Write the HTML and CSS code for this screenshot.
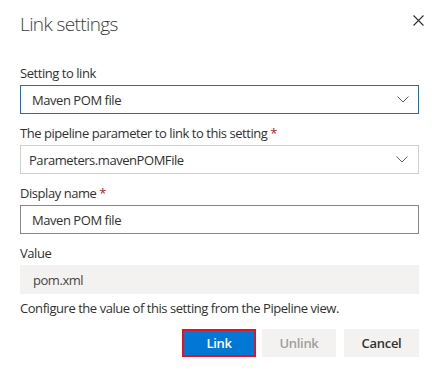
FILE: index.html
```html
<!DOCTYPE html>
<html lang="en">
<head>
<meta charset="utf-8">
<title>Link settings</title>
<link rel="stylesheet" href="styles.css">
</head>
<body>
<div class="dialog">
  <div class="header">
    <h1 class="title">Link settings</h1>
    <button class="close" aria-label="Close">
      <svg width="11" height="11" viewBox="0 0 11 11"><path d="M0.5 0.5 L10.5 10.5 M10.5 0.5 L0.5 10.5" stroke="#323130" stroke-width="1.1" fill="none"/></svg>
    </button>
  </div>

  <div class="field">
    <div class="label">Setting to link</div>
    <div class="box dropdown focused">
      <span class="value">Maven POM file</span>
      <svg class="chev" width="12" height="7" viewBox="0 0 12 7"><path d="M0.5 0.5 L6 6 L11.5 0.5" stroke="#605e5c" stroke-width="1" fill="none"/></svg>
    </div>
  </div>

  <div class="field">
    <div class="label">The pipeline parameter to link to this setting <span class="req">*</span></div>
    <div class="box dropdown plain">
      <span class="value">Parameters.mavenPOMFile</span>
      <svg class="chev" width="12" height="7" viewBox="0 0 12 7"><path d="M0.5 0.5 L6 6 L11.5 0.5" stroke="#605e5c" stroke-width="1" fill="none"/></svg>
    </div>
  </div>

  <div class="field">
    <div class="label">Display name <span class="req">*</span></div>
    <div class="box input">
      <span class="value">Maven POM file</span>
    </div>
  </div>

  <div class="field last">
    <div class="label">Value</div>
    <div class="box readonly">
      <span class="value">pom.xml</span>
    </div>
  </div>

  <p class="hint">Configure the value of this setting from the Pipeline view.</p>

  <div class="footer">
    <button class="btn primary">Link</button>
    <button class="btn disabled">Unlink</button>
    <button class="btn secondary">Cancel</button>
  </div>
</div>
</body>
</html>
```

FILE: styles.css
```css
* { box-sizing: border-box; }

html, body {
  margin: 0;
  padding: 0;
  background: #ffffff;
}

body {
  font-family: "Open Sans", "Noto Sans", "Liberation Sans", sans-serif;
  font-size: 13px;
  letter-spacing: -0.45px;
  color: #323130;
}

.dialog {
  width: 441px;
  height: 370px;
  padding: 10px 22px 0 20px;
}

.header {
  display: flex;
  justify-content: space-between;
  align-items: flex-start;
}

.title {
  margin: 0;
  font-size: 19px;
  line-height: 28px;
  font-weight: 300;
  letter-spacing: -0.6px;
  color: #3b3a39;
}

.close {
  border: none;
  background: none;
  padding: 0;
  margin: 5px -5px 0 0;
  width: 11px;
  height: 11px;
  display: flex;
}

.field {
  margin-bottom: 9px;
}

.header + .field {
  margin-top: 25px;
}

.field.last {
  margin-bottom: 0;
}

.label {
  line-height: 20px;
  margin-bottom: 2px;
  color: #323130;
}

.req {
  color: #a4262c;
}

.box {
  height: 29px;
  display: flex;
  align-items: center;
  justify-content: space-between;
  border: 1px solid transparent;
}

.dropdown.focused {
  border-color: #0078d4;
  padding: 0 9px 0 11px;
}

.dropdown.plain {
  border-color: #d2d0ce;
  padding: 0 10px 0 8px;
}

.input {
  border-color: #8a8886;
  padding: 0 11px;
}

.readonly {
  background: #f3f2f1;
  padding: 0 12px;
  color: #484644;
}

.chev {
  display: block;
}

.hint {
  margin: 4px 0 0;
  line-height: 20px;
}

.footer {
  margin-top: 11px;
  display: flex;
  justify-content: flex-end;
  gap: 8px;
}

.btn {
  width: 74px;
  height: 28px;
  border: none;
  font-family: inherit;
  font-size: 13px;
  letter-spacing: -0.3px;
  font-weight: 600;
  padding: 0;
}

.btn.primary {
  background: #0078d4;
  color: #ffffff;
  border: 2px solid #e81123;
  margin-right: -2px;
}

.btn.disabled {
  background: #f3f2f1;
  color: #a19f9d;
}

.btn.secondary {
  background: #f3f2f1;
  color: #323130;
  width: 75px;
}
```
